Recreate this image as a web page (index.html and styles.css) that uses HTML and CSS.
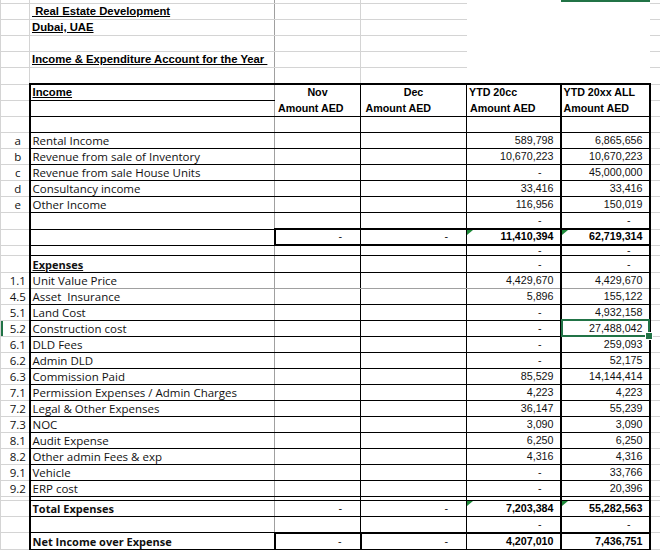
FILE: index.html
```html
<!DOCTYPE html>
<html>
<head>
<meta charset="utf-8">
<title>Income &amp; Expenditure Account</title>
<link rel="stylesheet" href="styles.css">
</head>
<body>
<table class="sheet">
<colgroup><col class="ca"><col class="cb"><col class="cc"><col class="cd"><col class="ce"><col class="cf"><col class="cg"></colgroup>
<tr class="top h3"><td></td><td></td><td></td><td></td><td></td><td class="colsel"></td><td></td></tr>
<tr class="top h16"><td></td><td class="title"> Real Estate Development</td><td></td><td></td><td></td><td></td><td></td></tr>
<tr class="top h16"><td></td><td class="title">Dubai, UAE</td><td></td><td></td><td></td><td></td><td></td></tr>
<tr class="top h16"><td></td><td></td><td></td><td></td><td></td><td></td><td></td></tr>
<tr class="top h16"><td></td><td class="title">Income &amp; Expenditure Account for the Year </td><td></td><td></td><td></td><td></td><td></td></tr>
<tr class="top h17"><td></td><td></td><td></td><td></td><td></td><td></td><td></td></tr>

<tr class="t hd1 h16"><td></td><td class="title">Income</td><td class="hc">Nov</td><td class="hc">Dec</td><td class="hl">YTD 20cc</td><td class="hl">YTD 20xx ALL</td><td></td></tr>
<tr class="t h16"><td></td><td></td><td class="hl pl3">Amount AED</td><td class="hl"> Amount AED</td><td class="hl pl3">Amount AED</td><td class="hl">Amount AED</td><td></td></tr>
<tr class="t h16"><td></td><td></td><td></td><td></td><td></td><td></td><td></td></tr>
<tr class="t h16"><td class="lab">a</td><td class="cal">Rental Income</td><td></td><td></td><td class="n">589,798</td><td class="n">6,865,656</td><td></td></tr>
<tr class="t h16"><td class="lab">b</td><td class="cal">Revenue from sale of Inventory</td><td></td><td></td><td class="n">10,670,223</td><td class="n">10,670,223</td><td></td></tr>
<tr class="t h16"><td class="lab">c</td><td class="cal">Revenue from sale House Units</td><td></td><td></td><td class="d">-</td><td class="n">45,000,000</td><td></td></tr>
<tr class="t h16"><td class="lab">d</td><td class="cal">Consultancy income</td><td></td><td></td><td class="n">33,416</td><td class="n">33,416</td><td></td></tr>
<tr class="t h16"><td class="lab">e</td><td class="cal">Other Income</td><td></td><td></td><td class="n">116,956</td><td class="n">150,019</td><td></td></tr>
<tr class="t h17"><td></td><td></td><td></td><td></td><td class="d">-</td><td class="d">-</td><td></td></tr>
<tr class="t tot h16"><td></td><td></td><td class="d">-</td><td class="d">-</td><td class="n b err">11,410,394</td><td class="n b err">62,719,314</td><td></td></tr>
<tr class="t h10"><td></td><td></td><td></td><td></td><td class="d"><span class="short">-</span></td><td class="d"><span class="short">-</span></td><td></td></tr>

<tr class="t h17"><td></td><td class="cal b u">Expenses</td><td></td><td></td><td class="d">-</td><td class="d">-</td><td></td></tr>
<tr class="t gr h16"><td class="lab">1.1</td><td class="cal">Unit Value Price</td><td></td><td></td><td class="n">4,429,670</td><td class="n">4,429,670</td><td></td></tr>
<tr class="t h16"><td class="lab">4.5</td><td class="cal">Asset  Insurance</td><td></td><td></td><td class="n">5,896</td><td class="n">155,122</td><td></td></tr>
<tr class="t h16"><td class="lab">5.1</td><td class="cal">Land Cost</td><td></td><td></td><td class="d">-</td><td class="n">4,932,158</td><td></td></tr>
<tr class="t h16"><td class="lab rowsel">5.2</td><td class="cal">Construction cost</td><td></td><td></td><td class="d">-</td><td class="n sel">27,488,042</td><td></td></tr>
<tr class="t h16"><td class="lab">6.1</td><td class="cal">DLD Fees</td><td></td><td></td><td class="d">-</td><td class="n">259,093</td><td></td></tr>
<tr class="t h16"><td class="lab">6.2</td><td class="cal">Admin DLD</td><td></td><td></td><td class="d">-</td><td class="n">52,175</td><td></td></tr>
<tr class="t h16"><td class="lab">6.3</td><td class="cal">Commission Paid</td><td></td><td></td><td class="n">85,529</td><td class="n">14,144,414</td><td></td></tr>
<tr class="t h16"><td class="lab">7.1</td><td class="cal">Permission Expenses / Admin Charges</td><td></td><td></td><td class="n">4,223</td><td class="n">4,223</td><td></td></tr>
<tr class="t h16"><td class="lab">7.2</td><td class="cal">Legal &amp; Other Expenses</td><td></td><td></td><td class="n">36,147</td><td class="n">55,239</td><td></td></tr>
<tr class="t h16"><td class="lab">7.3</td><td class="cal">NOC</td><td></td><td></td><td class="n">3,090</td><td class="n">3,090</td><td></td></tr>
<tr class="t h16"><td class="lab">8.1</td><td class="cal">Audit Expense</td><td></td><td></td><td class="n">6,250</td><td class="n">6,250</td><td></td></tr>
<tr class="t h16"><td class="lab">8.2</td><td class="cal">Other admin Fees &amp; exp</td><td></td><td></td><td class="n">4,316</td><td class="n">4,316</td><td></td></tr>
<tr class="t h16"><td class="lab">9.1</td><td class="cal">Vehicle</td><td></td><td></td><td class="d">-</td><td class="n">33,766</td><td></td></tr>
<tr class="t h16"><td class="lab">9.2</td><td class="cal">ERP cost</td><td></td><td></td><td class="d">-</td><td class="n">20,396</td><td></td></tr>
<tr class="t h4"><td></td><td></td><td></td><td></td><td></td><td></td><td></td></tr>
<tr class="t h16"><td></td><td class="cal b">Total Expenses</td><td class="d">-</td><td class="d">-</td><td class="n b err">7,203,384</td><td class="n b err">55,282,563</td><td></td></tr>
<tr class="t h16"><td></td><td></td><td></td><td></td><td class="d">-</td><td class="d">-</td><td></td></tr>
<tr class="t net h17"><td></td><td class="cal b">Net Income over Expense</td><td class="d">-</td><td class="d">-</td><td class="n b">4,207,010</td><td class="n b">7,436,751</td><td></td></tr>
<tr class="h1"><td></td><td></td><td></td><td></td><td></td><td></td><td></td></tr>
</table>
</body>
</html>
```

FILE: styles.css
```css
* { box-sizing: border-box; }
html, body { margin: 0; padding: 0; background: #fff; }
body { width: 660px; height: 550px; overflow: hidden; }

.sheet {
  border-collapse: collapse;
  table-layout: fixed;
  width: 660px;
  font-family: "Liberation Sans", Arial, sans-serif;
  font-size: 10.7px;
  color: #000;
}
.ca { width: 29px; }
.cb { width: 245px; }
.cc { width: 86px; }
.cd { width: 106px; }
.ce { width: 94px; }
.cf { width: 89px; }
.cg { width: 11px; }

.sheet td {
  position: relative;
  padding: 0 2px 1px 2px;
  vertical-align: bottom;
  white-space: pre;
  overflow: visible;
  line-height: 13px;
  border-right: 1px solid #d4d4d4;
  border-bottom: 1px solid #d4d4d4;
}
.sheet td:first-child { border-left: 1px solid #d4d4d4; }

.h1 { height: 1px; }
.h3 { height: 3px; }
.h4 { height: 4px; }
.h10 { height: 10px; }
.h16 { height: 16px; }
.h17 { height: 17px; }
.sheet .h1 td, .sheet .h3 td, .sheet .h4 td { padding: 0; line-height: 0; }
.sheet .h10 td { padding-top: 0; padding-bottom: 1px; line-height: 8px; }

/* area above the bordered table */
.top td:nth-child(2) { border-right-color: #a0a0a0; }
.top td:nth-child(4) { border-right: none; }
.top td:nth-child(5), .top td:nth-child(6) { border-right: none; border-bottom: none; }

/* bordered table rows */
.t td:nth-child(1) { border-right: 2px solid #000; }
.t td:nth-child(2) { border-bottom: 1px solid #000; border-right: 1px solid #a0a0a0; }
.t td:nth-child(3), .t td:nth-child(4) { border-bottom: 1px solid #000; border-right: 1px solid #000; }
.t td:nth-child(5), .t td:nth-child(6) { border-bottom: 1px solid #000; border-right: 2px solid #000; }

.hd1 td:nth-child(n+2):nth-child(-n+6) { border-top: 2px solid #000; }
.hd1 td:nth-child(n+3):nth-child(-n+6) { border-bottom: none; }

.tot td:nth-child(2) { border-right: 2px solid #000; }
.tot td:nth-child(n+3):nth-child(-n+6) { border-top: 2px solid #000; border-bottom: 2px solid #000; }

.net td:nth-child(2) { border-right: 2px solid #000; border-bottom: 2px solid #000; }
.net td:nth-child(3) { border-right: 2px solid #000; }
.net td:nth-child(n+3):nth-child(-n+6) { border-top: 2px solid #000; border-bottom: 2px solid #000; }

.gr td:nth-child(n+2):nth-child(-n+6) { border-bottom-color: #a0a0a0; }

/* text styles */
.sheet td.title {
  font-size: 11.3px;
  font-weight: bold;
  text-decoration: underline;
  padding-left: 2px;
}
.sheet td.hc { font-weight: bold; text-align: center; }
.sheet td.hl { font-weight: bold; text-align: left; }
.sheet td.pl3 { padding-left: 3px; }
.sheet td.cal {
  font-family: "Open Sans", "Noto Sans", sans-serif;
  font-size: 11.5px;
  color: #111;
}
.sheet td.cal.b { font-size: 11px; font-weight: bold; }
.sheet td.lab {
  font-family: "Open Sans", "Noto Sans", sans-serif;
  font-size: 11.5px;
  text-align: center;
  padding-left: 7px;
  padding-right: 1px;
  color: #111;
}
.sheet td.b { font-weight: bold; }
.sheet td.u { text-decoration: underline; }
.sheet td.n { text-align: right; padding-right: 6px; color: #111; }
.sheet td.d { text-align: right; padding-right: 18px; color: #111; }
.sheet td.n.b { color: #000; }
.short { display: inline-block; line-height: 8px; }

/* Excel chrome overlays */
.colsel { box-shadow: inset 0 2px 0 #217346; }
.rowsel { box-shadow: inset 2px 0 0 #217346; }
.sel::after {
  content: "";
  position: absolute;
  left: -1px;
  top: -2px;
  right: -1px;
  bottom: -1px;
  border: 2px solid #217346;
  pointer-events: none;
}
.sel::before {
  content: "";
  position: absolute;
  right: -4px;
  bottom: -4px;
  width: 6px;
  height: 6px;
  background: #217346;
  border: 1px solid #fff;
  z-index: 2;
}
.err::before {
  content: "";
  position: absolute;
  left: 0;
  top: 0;
  border-top: 5px solid #1e8a3a;
  border-right: 6px solid transparent;
}
```
